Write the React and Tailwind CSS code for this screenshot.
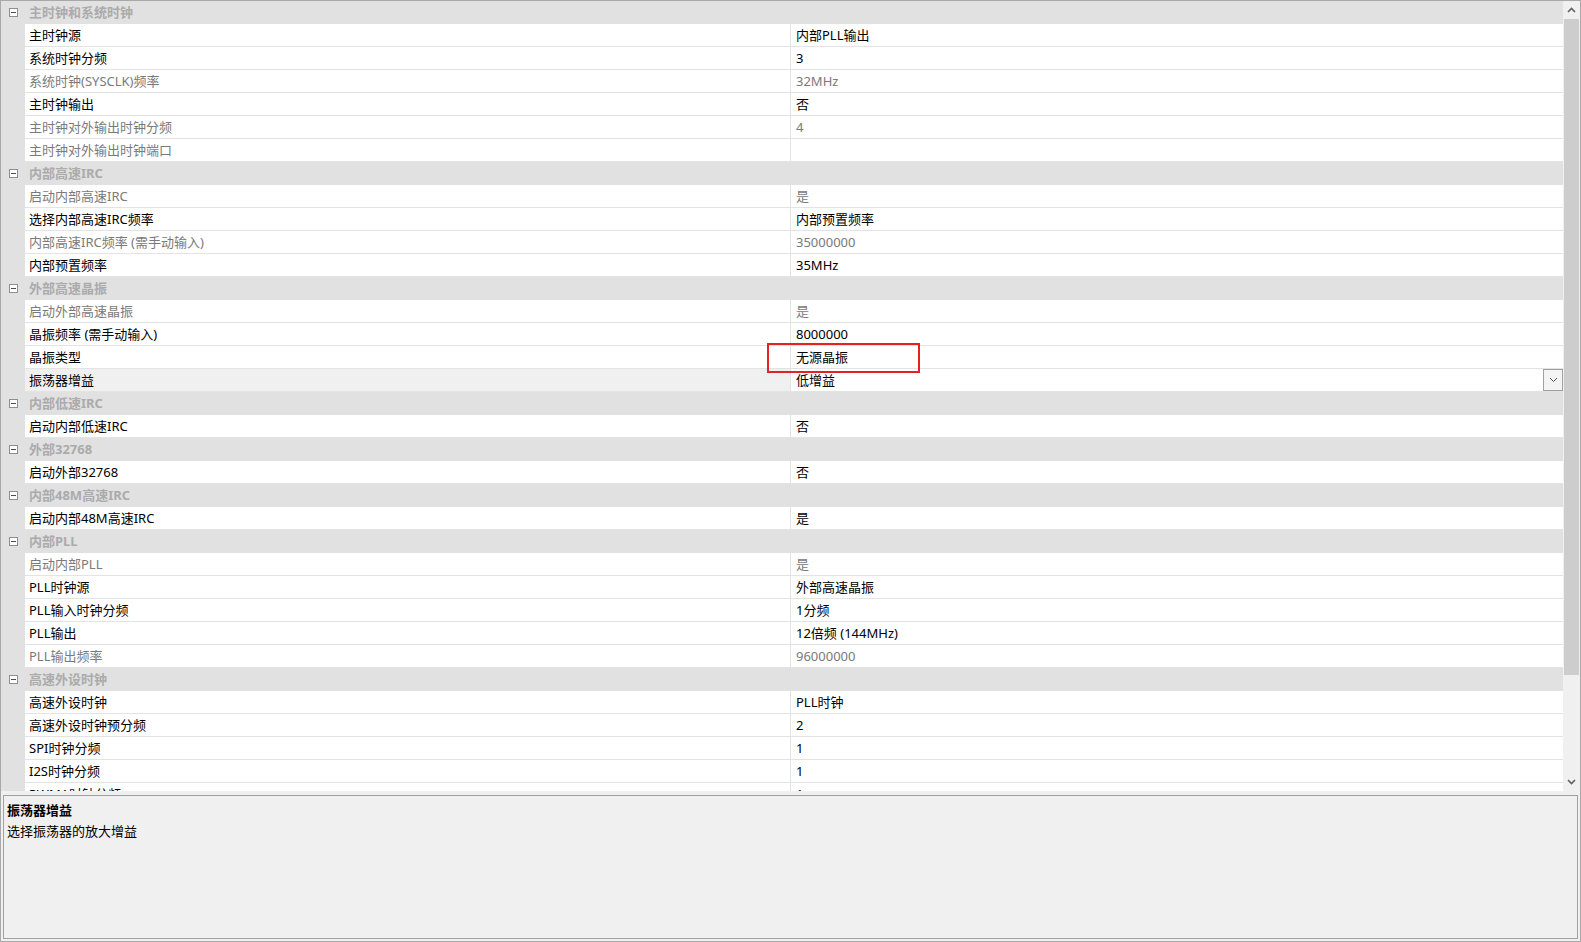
import React from "react";

const rows = [
  { h: "主时钟和系统时钟" },
  { l: "主时钟源", v: "内部PLL输出" },
  { l: "系统时钟分频", v: "3" },
  { l: "系统时钟(SYSCLK)频率", v: "32MHz", g: true },
  { l: "主时钟输出", v: "否" },
  { l: "主时钟对外输出时钟分频", v: "4", g: true },
  { l: "主时钟对外输出时钟端口", v: "", g: true },
  { h: "内部高速IRC" },
  { l: "启动内部高速IRC", v: "是", g: true },
  { l: "选择内部高速IRC频率", v: "内部预置频率" },
  { l: "内部高速IRC频率 (需手动输入)", v: "35000000", g: true },
  { l: "内部预置频率", v: "35MHz" },
  { h: "外部高速晶振" },
  { l: "启动外部高速晶振", v: "是", g: true },
  { l: "晶振频率 (需手动输入)", v: "8000000" },
  { l: "晶振类型", v: "无源晶振" },
  { l: "振荡器增益", v: "低增益", sel: true },
  { h: "内部低速IRC" },
  { l: "启动内部低速IRC", v: "否" },
  { h: "外部32768" },
  { l: "启动外部32768", v: "否" },
  { h: "内部48M高速IRC" },
  { l: "启动内部48M高速IRC", v: "是" },
  { h: "内部PLL" },
  { l: "启动内部PLL", v: "是", g: true },
  { l: "PLL时钟源", v: "外部高速晶振" },
  { l: "PLL输入时钟分频", v: "1分频" },
  { l: "PLL输出", v: "12倍频 (144MHz)" },
  { l: "PLL输出频率", v: "96000000", g: true },
  { h: "高速外设时钟" },
  { l: "高速外设时钟", v: "PLL时钟" },
  { l: "高速外设时钟预分频", v: "2" },
  { l: "SPI时钟分频", v: "1" },
  { l: "I2S时钟分频", v: "1" },
  { l: "PWMA时钟分频", v: "1" },
];

function Minus() {
  return (
    <div className="w-[9px] h-[9px] border border-[#8e8e8e] bg-white flex items-center justify-center">
      <div className="w-[5px] h-[1px] bg-[#4a4a4a]" />
    </div>
  );
}

function Chevron({ up }) {
  return (
    <svg width="9" height="6" viewBox="0 0 9 6">
      <polyline
        points={up ? "1,5 4.5,1.5 8,5" : "1,1 4.5,4.5 8,1"}
        fill="none"
        stroke="#606060"
        strokeWidth="1.6"
      />
    </svg>
  );
}

function Row({ r }) {
  if (r.h) {
    return (
      <div className="flex h-[23px] shrink-0 bg-[#e1e1e1] items-center">
        <div className="w-[24px] shrink-0 flex justify-center">
          <Minus />
        </div>
        <span className="pl-[4px] font-bold text-[#ababab]">{r.h}</span>
      </div>
    );
  }
  const c = r.g ? "text-[#7a7a7a]" : "text-black";
  return (
    <div className="flex h-[23px] shrink-0">
      <div className="w-[24px] shrink-0 bg-[#e1e1e1]" />
      <div
        className={
          "w-[765px] shrink-0 border-b border-[#e3e3e3] pl-[4px] flex items-center whitespace-nowrap " +
          c +
          (r.sel ? " bg-[#f0f0f0]" : " bg-white")
        }
      >
        {r.l}
      </div>
      <div className="w-[1px] shrink-0 bg-[#e3e3e3]" />
      <div
        className={
          "flex-1 border-b border-[#e3e3e3] bg-white pl-[5px] flex items-center whitespace-nowrap " + c
        }
      >
        <span className="flex-1">{r.v}</span>
        {r.sel && (
          <div className="w-[20px] h-[22px] border border-[#a0a0a0] bg-[#f4f4f4] flex items-center justify-center">
            <svg width="9" height="6" viewBox="0 0 9 6">
              <polyline points="1,1 4.5,4.5 8,1" fill="none" stroke="#505050" strokeWidth="1" />
            </svg>
          </div>
        )}
      </div>
    </div>
  );
}

export default function App() {
  return (
    <div
      className="relative w-[1581px] h-[942px] bg-[#f0f0f0] border border-[#a8a8a8] flex flex-col overflow-hidden text-[13px] leading-[21px]"
      style={{ fontFamily: '"Noto Sans", "Noto Sans CJK SC", sans-serif' }}
    >
      <div className="flex h-[790px] shrink-0">
        <div className="flex-1 flex flex-col overflow-hidden bg-white">
          {rows.map((r, i) => (
            <Row key={i} r={r} />
          ))}
        </div>
        <div className="w-[17px] shrink-0 bg-[#f0f0f0] flex flex-col">
          <div className="h-[18px] flex items-center justify-center">
            <Chevron up />
          </div>
          <div className="h-[656px] mx-[1px] bg-[#cdcdcd]" />
          <div className="flex-1" />
          <div className="h-[18px] flex items-center justify-center">
            <Chevron />
          </div>
        </div>
      </div>
      <div className="h-[4px] shrink-0" />
      <div className="flex-1 mx-[2px] mb-[2px] border border-[#a0a0a0] bg-[#f0f0f0] pt-[4px] pl-[3px]">
        <div className="font-bold text-black">振荡器增益</div>
        <div className="text-black">选择振荡器的放大增益</div>
      </div>
      <div className="absolute left-[766px] top-[342px] w-[153px] h-[30px] border-2 border-[#e52222]" />
    </div>
  );
}
